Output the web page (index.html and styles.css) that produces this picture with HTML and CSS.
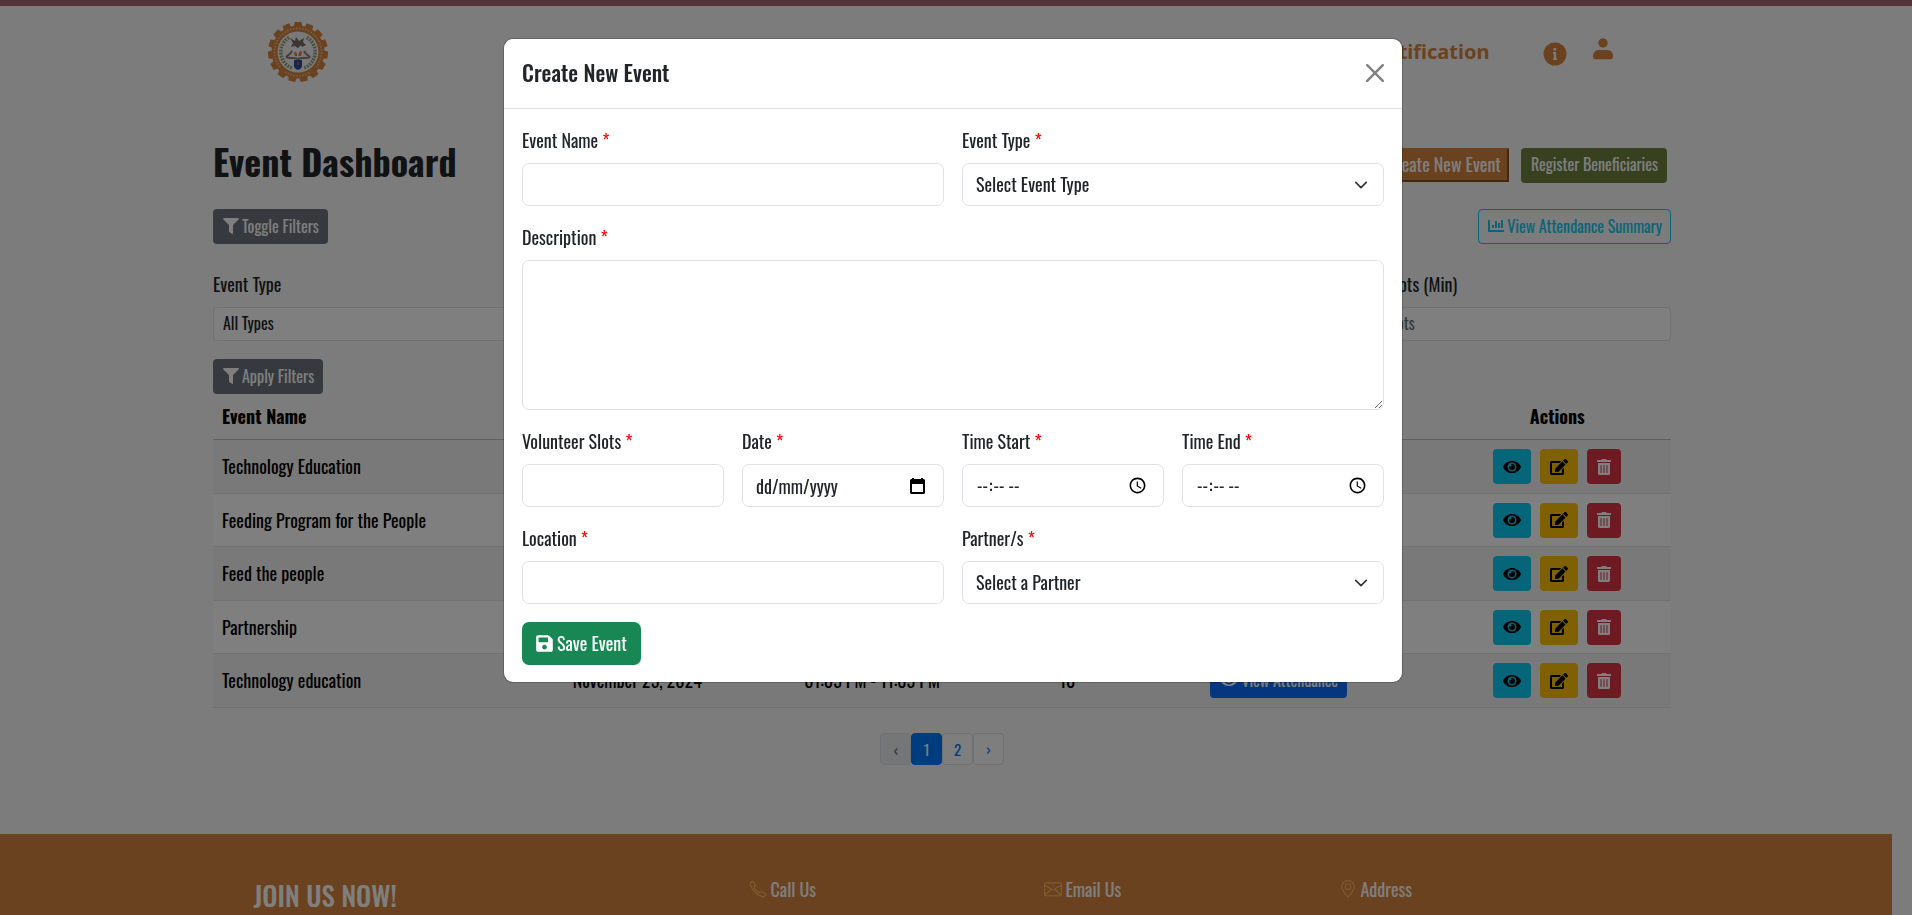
FILE: index.html
```html
<!DOCTYPE html>
<html lang="en">
<head>
<meta charset="utf-8">
<meta name="viewport" content="width=device-width, initial-scale=1">
<title>Event Dashboard</title>
<link rel="stylesheet" href="styles.css">
</head>
<body>
<svg class="sprite" aria-hidden="true">
  <symbol id="i-eye" viewBox="0 0 576 512"><path d="M572.500 241.400C518.300 135.600 410.900 64 288 64S57.700 135.600 3.500 241.400a32.400 32.400 0 0 0 0 29.200C57.700 376.400 165.100 448 288 448s230.300-71.600 284.500-177.400a32.400 32.400 0 0 0 0-29.200zM288 400a144 144 0 1 1 144-144 143.900 143.900 0 0 1-144 144zm0-240a95.300 95.300 0 0 0-25.300 3.800 47.900 47.900 0 0 1-66.900 66.900A95.800 95.800 0 1 0 288 160z"/></symbol>
  <symbol id="i-edit" viewBox="0 0 576 512"><path d="M402.600 83.200l90.200 90.200c3.800 3.800 3.800 10 0 13.800L274.400 405.600l-92.800 10.300c-12.400 1.400-22.900-9.100-21.500-21.500l10.300-92.800L388.800 83.200c3.800-3.800 10-3.800 13.800 0zm162-22.900l-48.800-48.800c-15.200-15.200-39.900-15.200-55.200 0l-35.400 35.400c-3.800 3.800-3.800 10 0 13.800l90.200 90.200c3.800 3.800 10 3.800 13.800 0l35.400-35.400c15.200-15.300 15.200-40 0-55.200zM384 346.200V448H64V128h229.800c3.200 0 6.200-1.300 8.500-3.500l40-40c7.600-7.600 2.200-20.500-8.500-20.500H48C21.500 64 0 85.500 0 112v352c0 26.500 21.500 48 48 48h352c26.500 0 48-21.500 48-48V306.200c0-10.700-12.900-16-20.500-8.500l-40 40c-2.200 2.300-3.500 5.300-3.500 8.500z"/></symbol>
  <symbol id="i-trash" viewBox="0 0 448 512"><path d="M32 464a48 48 0 0 0 48 48h288a48 48 0 0 0 48-48V128H32zm272-256a16 16 0 0 1 32 0v224a16 16 0 0 1-32 0zm-96 0a16 16 0 0 1 32 0v224a16 16 0 0 1-32 0zm-96 0a16 16 0 0 1 32 0v224a16 16 0 0 1-32 0zM432 32H312l-9.400-18.700A24 24 0 0 0 281.100 0H166.800a23.700 23.700 0 0 0-21.400 13.300L136 32H16A16 16 0 0 0 0 48v32a16 16 0 0 0 16 16h416a16 16 0 0 0 16-16V48a16 16 0 0 0-16-16z"/></symbol>
  <symbol id="i-filter" viewBox="0 0 512 512"><path d="M488 0H24C2.700 0-8 25.900 7.100 41L192 226v206c0 7.800 3.800 15.200 10.200 19.700l80 56C298 518.700 320 507.500 320 488V226L505 41C520 25.900 509.300 0 488 0z"/></symbol>
  <symbol id="i-chart" viewBox="0 0 512 512"><path d="M332.800 320h38.400c6.400 0 12.800-6.400 12.800-12.800V172.800c0-6.400-6.400-12.800-12.800-12.800h-38.400c-6.400 0-12.800 6.400-12.800 12.800v134.400c0 6.400 6.400 12.800 12.800 12.800zm96 0h38.400c6.400 0 12.800-6.400 12.800-12.800V76.800c0-6.400-6.400-12.800-12.800-12.800h-38.400c-6.400 0-12.800 6.400-12.800 12.800v230.400c0 6.400 6.400 12.800 12.800 12.800zm-288 0h38.400c6.400 0 12.800-6.400 12.800-12.800v-70.400c0-6.400-6.400-12.800-12.800-12.800h-38.400c-6.400 0-12.800 6.400-12.800 12.800v70.400c0 6.400 6.400 12.800 12.800 12.800zm96 0h38.400c6.400 0 12.800-6.400 12.800-12.800V108.800c0-6.400-6.400-12.800-12.800-12.800h-38.400c-6.400 0-12.800 6.400-12.800 12.800v198.400c0 6.400 6.400 12.800 12.800 12.800zM496 384H64V80c0-8.800-7.200-16-16-16H16C7.200 64 0 71.200 0 80v336c0 17.700 14.300 32 32 32h464c8.800 0 16-7.200 16-16v-32c0-8.800-7.200-16-16-16z"/></symbol>
  <symbol id="i-save" viewBox="0 0 448 512"><path d="M433.900 129.900l-83.900-83.900A48 48 0 0 0 316.100 32H48C21.500 32 0 53.500 0 80v352c0 26.500 21.500 48 48 48h352c26.500 0 48-21.500 48-48V163.900a48 48 0 0 0-14.100-34zM224 416c-35.300 0-64-28.700-64-64s28.700-64 64-64 64 28.700 64 64-28.700 64-64 64zm96-304.500V212c0 6.600-5.400 12-12 12H76c-6.600 0-12-5.400-12-12V108c0-6.600 5.400-12 12-12h228.500c3.200 0 6.200 1.300 8.500 3.500l3.500 3.500c2.200 2.200 3.500 5.300 3.500 8.500z"/></symbol>
</svg>

<div class="page">
<div class="topbar"></div>
<header class="header">
  <div class="header-inner">
    <a class="logo" href="#" aria-label="Home">
      <svg width="60" height="60" viewBox="-30 -30 60 60">
        <g fill="#d68440">
          <circle r="26.500"/>
          <path id="tooth" d="M-4.200-25L-3.500-30H3.500L4.200-25z"/>
          <use href="#tooth" transform="rotate(24)"/><use href="#tooth" transform="rotate(48)"/><use href="#tooth" transform="rotate(72)"/><use href="#tooth" transform="rotate(96)"/><use href="#tooth" transform="rotate(120)"/><use href="#tooth" transform="rotate(144)"/><use href="#tooth" transform="rotate(168)"/><use href="#tooth" transform="rotate(192)"/><use href="#tooth" transform="rotate(216)"/><use href="#tooth" transform="rotate(240)"/><use href="#tooth" transform="rotate(264)"/><use href="#tooth" transform="rotate(288)"/><use href="#tooth" transform="rotate(312)"/><use href="#tooth" transform="rotate(336)"/>
        </g>
        <path d="M-18 15A23.500 23.500 0 1 1 18 15" fill="none" stroke="#e9b88e" stroke-width="2" stroke-dasharray="1.500 1.500"/>
        <path d="M-13 20A23.500 23.500 0 0 0 13 20" fill="none" stroke="#e9b88e" stroke-width="2" stroke-dasharray="1.500 1.500"/>
        <circle r="20.500" fill="#f3f3f3"/>
        <path d="M-9-14.500A17 17 0 0 0-6 16M9-14.500A17 17 0 0 1 6 16" fill="none" stroke="#8d9c74" stroke-width="3.500" stroke-dasharray="1.800 1.200"/>
        <path d="M-8-14l5 3 1-4 3 4 5-3-1 4 3 3-4 2-1-2-3 3-3-2-4 1 2-4z" fill="#7b6b63"/>
        <path d="M-12 5c2-2 4-2 6-6M12 5c-2-2-4-2-6-6M-12 5c4 2 8 0 12 2 4-2 8 0 12-2" fill="none" stroke="#8e7d73" stroke-width="2"/>
        <path d="M-4 0l3 1v3h-2zM2-1l2 1-1 4-3 0z" fill="#e07f3a"/>
        <path d="M-4 8h8v6c0 2-2 3-4 4-2-1-4-2-4-4z" fill="#264c9c"/>
        <path d="M-1 10h2v3h-2z" fill="#d44848"/>
      </svg>
    </a>
    <nav class="nav">
      <a class="nav-text" href="#">Notification</a>
      <a class="nav-info" href="#" aria-label="Information"><svg width="24" height="24" viewBox="0 0 24 24"><circle cx="12" cy="12" r="11.500" fill="#d68440"/><path d="M10.500 6h2.600v2.600h-2.600zM10 10h3.100v6.200h1v1.800h-3.800v-1.800h.5v-4.400H10z" fill="#f8f8f8"/></svg></a>
      <a class="nav-user" href="#" aria-label="Account"><svg width="20" height="22" viewBox="0 0 20 22" fill="#d68440"><circle cx="10" cy="5" r="4.700"/><path d="M0 19v-1c0-3.500 2.500-6 6-6h8c3.500 0 6 2.500 6 6v1c0 1.300-1 2.300-2.300 2.300H2.300C1 21.300 0 20.300 0 19z"/></svg></a>
    </nav>
  </div>
</header>

<main class="main">
  <div class="container">
    <div class="title-row">
      <h1>Event Dashboard</h1>
      <div class="title-actions">
        <button class="btn-create" type="button">Create New Event</button>
        <button class="btn btn-green" type="button">Register Beneficiaries</button>
      </div>
    </div>
    <div class="tool-row">
      <button class="btn btn-gray" type="button"><svg class="ico"><use href="#i-filter"/></svg>Toggle Filters</button>
      <button class="btn btn-outline" type="button"><svg class="ico"><use href="#i-chart"/></svg>View Attendance Summary</button>
    </div>
    <form class="filters">
      <div class="field"><label for="f-type">Event Type</label><select id="f-type" class="control small"><option>All Types</option></select></div>
      <div class="field"><label for="f-date">Date</label><input id="f-date" class="control small" type="text"></div>
      <div class="field"><label for="f-partner">Partner</label><select id="f-partner" class="control small"><option>All Partners</option></select></div>
      <div class="field"><label for="f-slots">Volunteer Slots (Min)</label><input id="f-slots" class="control small" type="text" placeholder="Minimum slots"></div>
    </form>
    <button class="btn btn-gray" type="button"><svg class="ico"><use href="#i-filter"/></svg>Apply Filters</button>
    <table class="table">
      <colgroup><col class="c-name"><col class="c-date"><col class="c-time"><col class="c-slots"><col class="c-att"><col class="c-act"></colgroup>
      <thead><tr><th>Event Name</th><th>Date</th><th>Time</th><th>Slots</th><th>Attendance</th><th>Actions</th></tr></thead>
      <tbody>
        <tr><td>Technology Education</td><td></td><td></td><td></td><td></td><td><div class="actions"><button class="btn btn-info" aria-label="View"><svg class="ico wide"><use href="#i-eye"/></svg></button><button class="btn btn-warn" aria-label="Edit"><svg class="ico wide"><use href="#i-edit"/></svg></button><button class="btn btn-danger" aria-label="Delete"><svg class="ico slim"><use href="#i-trash"/></svg></button></div></td></tr>
        <tr><td>Feeding Program for the People</td><td></td><td></td><td></td><td></td><td><div class="actions"><button class="btn btn-info" aria-label="View"><svg class="ico wide"><use href="#i-eye"/></svg></button><button class="btn btn-warn" aria-label="Edit"><svg class="ico wide"><use href="#i-edit"/></svg></button><button class="btn btn-danger" aria-label="Delete"><svg class="ico slim"><use href="#i-trash"/></svg></button></div></td></tr>
        <tr><td>Feed the people</td><td></td><td></td><td></td><td></td><td><div class="actions"><button class="btn btn-info" aria-label="View"><svg class="ico wide"><use href="#i-eye"/></svg></button><button class="btn btn-warn" aria-label="Edit"><svg class="ico wide"><use href="#i-edit"/></svg></button><button class="btn btn-danger" aria-label="Delete"><svg class="ico slim"><use href="#i-trash"/></svg></button></div></td></tr>
        <tr><td>Partnership</td><td></td><td></td><td></td><td></td><td><div class="actions"><button class="btn btn-info" aria-label="View"><svg class="ico wide"><use href="#i-eye"/></svg></button><button class="btn btn-warn" aria-label="Edit"><svg class="ico wide"><use href="#i-edit"/></svg></button><button class="btn btn-danger" aria-label="Delete"><svg class="ico slim"><use href="#i-trash"/></svg></button></div></td></tr>
        <tr><td>Technology education</td><td>November 25, 2024</td><td>01:05 PM - 11:05 PM</td><td>10</td><td><button class="btn btn-primary" type="button"><svg class="ico wide"><use href="#i-eye"/></svg>View Attendance</button></td><td><div class="actions"><button class="btn btn-info" aria-label="View"><svg class="ico wide"><use href="#i-eye"/></svg></button><button class="btn btn-warn" aria-label="Edit"><svg class="ico wide"><use href="#i-edit"/></svg></button><button class="btn btn-danger" aria-label="Delete"><svg class="ico slim"><use href="#i-trash"/></svg></button></div></td></tr>
      </tbody>
    </table>
    <nav class="pager" aria-label="Pages"><a class="off" href="#">‹</a><a class="on" href="#">1</a><a href="#">2</a><a href="#">›</a></nav>
  </div>
</main>

<footer class="footer">
  <div class="footer-inner">
    <h2>JOIN US NOW!</h2>
    <h3><svg width="18" height="18" viewBox="0 0 16 16"><path d="M3.600 1.300a.7.700 0 0 0-1 0l-1 1c-.5.500-.7 1.200-.5 1.800a17.600 17.600 0 0 0 4.200 6.600 17.600 17.600 0 0 0 6.600 4.200c.6.200 1.300 0 1.800-.5l1-1a.7.700 0 0 0-.1-1l-2.300-1.800a.7.700 0 0 0-.6-.1l-2.200.5a1.700 1.700 0 0 1-1.700-.5L5.400 8.100a1.700 1.700 0 0 1-.5-1.700l.6-2.200a.7.700 0 0 0-.2-.6z"/></svg>Call Us</h3>
    <h3><svg width="18" height="18" viewBox="0 0 16 16"><rect x=".5" y="2.500" width="15" height="11.500" rx="1.500"/><path d="M.5 4.500L8 9l7.500-4.500M.8 13.300L6.500 8.200M15.200 13.300L9.500 8.200"/></svg>Email Us</h3>
    <h3><svg width="18" height="18" viewBox="0 0 16 16"><path d="M8 15.500C4.500 11.500 2.500 8.500 2.500 6a5.500 5.500 0 0 1 11 0c0 2.500-2 5.500-5.500 9.500z"/><circle cx="8" cy="6" r="2.500"/></svg>Address</h3>
  </div>
</footer>
</div>

<div class="backdrop">
  <div class="modal" role="dialog" aria-modal="true" aria-labelledby="modal-title">
    <div class="modal-header">
      <h2 id="modal-title">Create New Event</h2>
      <button class="close" type="button" aria-label="Close"><svg width="18" height="18" viewBox="0 0 18 18"><path d="M1.200 1.200l15.600 15.600M16.800 1.200L1.200 16.800" stroke="#808080" stroke-width="2.400" stroke-linecap="round"/></svg></button>
    </div>
    <form class="modal-body">
      <div class="field half"><label for="name">Event Name <b>*</b></label><input id="name" class="control" type="text"></div>
      <div class="field half"><label for="type">Event Type <b>*</b></label><select id="type" class="control arrow"><option>Select Event Type</option></select></div>
      <div class="field full"><label for="desc">Description <b>*</b></label><textarea id="desc" class="control" rows="5"></textarea></div>
      <div class="field"><label for="slots">Volunteer Slots <b>*</b></label><input id="slots" class="control" type="text"></div>
      <div class="field"><label for="date">Date <b>*</b></label><input id="date" class="control date" type="text" placeholder="dd/mm/yyyy"></div>
      <div class="field"><label for="start">Time Start <b>*</b></label><input id="start" class="control" type="time"></div>
      <div class="field"><label for="end">Time End <b>*</b></label><input id="end" class="control" type="time"></div>
      <div class="field half"><label for="loc">Location <b>*</b></label><input id="loc" class="control" type="text"></div>
      <div class="field half"><label for="partner">Partner/s <b>*</b></label><select id="partner" class="control arrow"><option>Select a Partner</option></select></div>
      <div class="full"><button class="btn-save" type="button"><svg class="ico save"><use href="#i-save"/></svg>Save Event</button></div>
    </form>
  </div>
</div>
</body>
</html>
```
FILE: styles.css
```css
* { box-sizing: border-box; }

body {
  margin: 0;
  background: #f8f8f8;
  color: #212529;
  font: 18px/27px "Oswald", "Liberation Sans Narrow", "Roboto Condensed", sans-serif;
}

h1, h2, h3 { margin: 0; }
button, input, select, textarea { font: inherit; color: inherit; }
a { text-decoration: none; }
.sprite { display: none; }

.ico { width: 16px; height: 16px; fill: currentColor; flex: none; }
.ico.wide { width: 18px; }
.ico.slim { width: 14px; }
.ico.save { width: 17px; height: 19px; }

.page { display: flex; flex-direction: column; height: 100vh; overflow: hidden; }
.page > * { flex: none; }

.topbar { height: 6px; background: #a26672; }

.header { padding-right: 32px; }
.header-inner {
  max-width: 1345px;
  height: 92px;
  margin: 0 auto;
  display: flex;
  align-items: center;
  justify-content: space-between;
}
.logo svg { display: block; }
.nav { display: flex; align-items: center; color: #d68440; }
.nav svg { display: block; }
.nav-text { color: inherit; font: 700 20px/28px "Noto Sans", sans-serif; }
.nav-info { margin-left: 53px; padding-top: 3px; }
.nav-user { margin-left: 26px; padding-bottom: 7px; }

.main { padding: 45px 28px 69px 0; }
.container { max-width: 1458px; margin: 0 auto; }

.title-row { display: flex; justify-content: space-between; align-items: center; height: 44px; }
.title-row h1 { padding-bottom: 8px; font-size: 36px; line-height: 44px; font-weight: 700; }
.title-actions { display: flex; gap: 12px; padding-right: 4px; }
.title-actions > * { height: 34px; }

.btn {
  display: inline-flex;
  align-items: center;
  gap: 3px;
  height: 35px;
  padding: 0 8px 2px 9px;
  border: 1px solid transparent;
  border-radius: 4px;
  font-size: 16px;
  line-height: 24px;
  white-space: nowrap;
  color: #fff;
}
.actions .btn { padding: 0 9px; }
.btn-create { padding: 0 6px 2px; border: 2px outset #d68440; background: #d68440; color: #fff; line-height: 24px; white-space: nowrap; }
.btn-green { background: #6e8240; }
.btn-gray { background: #6c757d; }
.btn-outline { border-color: #0dcaf0; background: transparent; color: #0dcaf0; }
.btn-info { background: #0dcaf0; color: #000; }
.btn-warn { background: #ffc107; color: #000; }
.btn-danger { background: #dc3545; }
.btn-primary { background: #0d6efd; }

.tool-row { display: flex; justify-content: space-between; margin-top: 22px; }

.filters { display: grid; grid-template-columns: repeat(4, 1fr); gap: 18px; margin: 27px 0 18px; }

.field { display: flex; flex-direction: column; gap: 9px; min-width: 0; }
.field b { color: #f00; font-weight: 400; }
.control {
  display: block;
  width: 100%;
  height: 43px;
  padding: 0 13px;
  border: 1px solid #dee2e6;
  border-radius: 7px;
  background: #fff;
  color: #212529;
}
.control::placeholder { color: #6c757d; }
select.control { appearance: none; }
.control.small { height: 34px; padding: 0 9px 2px; border-radius: 4px; font-size: 16px; }
textarea.control { height: 150px; padding: 6px 13px; resize: vertical; }
.control.arrow {
  background: #fff url("data:image/svg+xml,%3Csvg xmlns='http://www.w3.org/2000/svg' viewBox='0 0 16 16'%3E%3Cpath fill='none' stroke='%23343a40' stroke-linecap='round' stroke-linejoin='round' stroke-width='2' d='m2 5 6 6 6-6'/%3E%3C/svg%3E") no-repeat right 15px center / 14px 14px;
}
.control.date {
  background: #fff url("data:image/svg+xml,%3Csvg xmlns='http://www.w3.org/2000/svg' viewBox='0 0 15 16'%3E%3Cpath fill-rule='evenodd' d='M2 0h2v1h7V0h2v1h1l1 1v13l-1 1H1l-1-1V2l1-1h1zM2 6v8h11V6z'/%3E%3C/svg%3E") no-repeat right 18px center / 15px 16px;
}
.control.date::placeholder { color: #212529; }

.table { width: 100%; table-layout: fixed; border-collapse: collapse; color: #000; }
.c-name { width: 23.2%; }
.c-date { width: 11.8%; }
.c-time { width: 20.4%; }
.c-slots { width: 6.4%; }
.c-att { width: 22.6%; }
.c-act { width: 15.6%; }
.table th, .table td { padding: 9px; text-align: center; }
.table th:first-child, .table td:first-child { text-align: left; }
.table th { border-bottom: 1px solid #bfc0c1; font-weight: 700; }
.table td { padding: 8px 0; height: 53px; background: #fff; border-bottom: 1px solid #dee2e6; }
.table td:first-child { padding-left: 9px; }
.table tbody tr:nth-child(odd) td { height: 54px; background: #f2f2f2; }
.table .btn { vertical-align: top; }
.actions { display: flex; justify-content: center; gap: 9px; }

.pager { display: flex; justify-content: center; margin-top: 25px; }
.pager a {
  min-width: 31px;
  height: 32px;
  border: 1px solid #dee2e6;
  border-radius: 4px;
  background: #fdfdfd;
  color: #007bff;
  font-size: 15px;
  line-height: 30px;
  text-align: center;
}
.pager .off { background: #e9ecef; color: #6c757d; }
.pager .on { background: #007bff; border-color: #007bff; color: #fff; }

.page > .footer { flex: 1 0 0; min-height: 0; margin-right: 20px; padding: 39px 5px 0 0; background: #d68440; color: #fff; }
.footer-inner { display: grid; grid-template-columns: 495fr 295fr 295fr 295fr; align-items: start; max-width: 1380px; margin: 0 auto; }
.footer h2 { font-size: 27px; line-height: 44px; font-weight: 500; }
.footer h3 { display: flex; align-items: center; gap: 4px; font-size: 18px; line-height: 32px; font-weight: 400; }
.footer svg { fill: none; stroke: #ffb85c; stroke-width: 1; }

.backdrop { position: fixed; inset: 0; display: flex; justify-content: center; align-items: flex-start; padding: 38px 16px 0 10px; background: rgba(0, 0, 0, .5); }
.modal { width: 100%; max-width: 900px; border: 1px solid rgba(0, 0, 0, .2); border-radius: 10px; background: #fff; background-clip: padding-box; }
.modal-header { display: flex; justify-content: space-between; align-items: center; height: 70px; padding: 0 18px 2px; border-bottom: 1px solid #dee2e6; }
.modal-header h2 { font-size: 22px; line-height: 33px; font-weight: 500; }
.close { display: flex; padding: 0; border: 0; background: none; }
.modal-body { display: grid; grid-template-columns: repeat(4, 1fr); gap: 18px; padding: 18px 18px 17px; }
.half { grid-column: span 2; }
.full { grid-column: 1 / -1; }
.btn-save { display: inline-flex; align-items: center; gap: 4px; height: 43px; padding: 0 14px; border: 0; border-radius: 7px; background: #198754; color: #fff; vertical-align: top; }
```
